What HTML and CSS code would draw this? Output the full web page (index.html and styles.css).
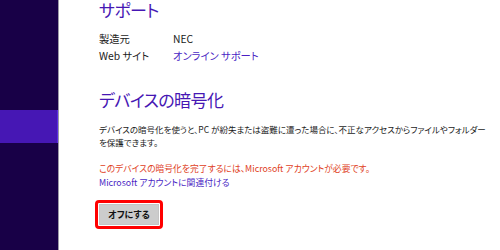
FILE: index.html
```html
<!DOCTYPE html>
<html lang="ja">
<head>
<meta charset="utf-8">
<link rel="stylesheet" href="styles.css">
</head>
<body>
<div class="app">
  <aside class="nav">
    <div class="nav-item active"></div>
  </aside>
  <main class="content">
    <h2 class="heading">サポート</h2>
    <dl class="info">
      <dt>製造元</dt><dd>NEC</dd>
      <dt>Web サイト</dt><dd><a class="link" href="#">オンライン サポート</a></dd>
    </dl>
    <h2 class="heading heading-2">デバイスの暗号化</h2>
    <p class="desc">デバイスの暗号化を使うと、PC が紛失または盗難に遭った場合に、不正なアクセスからファイルやフォルダー<br>を保護できます。</p>
    <p class="warn">このデバイスの暗号化を完了するには、Microsoft アカウントが必要です。</p>
    <a class="link link-block" href="#">Microsoft アカウントに関連付ける</a>
    <div class="btn-wrap"><button class="btn" type="button">オフにする</button></div>
  </main>
</div>
</body>
</html>
```
FILE: styles.css
```css
* { box-sizing: border-box; }
html, body { margin: 0; padding: 0; background: #fff; }
body {
  font-family: "Noto Sans CJK JP", "Noto Sans", sans-serif;
  font-feature-settings: "palt";
  color: #1a1a1a;
  width: 500px;
  height: 250px;
  overflow: hidden;
}
.app { display: flex; height: 250px; }
.nav {
  width: 59px;
  flex: none;
  background: #180047;
  border-right: 1px solid #9c9aa6;
  padding-top: 110px;
}
.nav-item.active {
  height: 33px;
  background: #4617b4;
  border-right: 1px solid #5a2de0;
}
.content { padding-left: 40px; flex: 1; }
.heading {
  margin: 0;
  font-weight: normal;
  font-size: 17px;
  line-height: 20px;
  letter-spacing: -0.6px;
  color: #4617b4;
}
.heading-2 { margin-top: 26px; }
.info {
  margin: 10px 0 0;
  display: grid;
  grid-template-columns: 74px auto;
  font-size: 10.3px;
  line-height: 17px;
}
.info dt, .info dd { margin: 0; }
.link { color: #4a1fc4; text-decoration: none; }
.desc {
  margin: 13px 0 0;
  font-size: 8.5px;
  line-height: 13px;
  white-space: nowrap;
}
.warn {
  margin: 13px 0 0;
  font-size: 8.8px;
  line-height: 14px;
  color: #e0401c;
}
.link-block { display: block; font-size: 8.8px; line-height: 14px; }
.btn-wrap {
  margin: 10px 0 0 -4px;
  display: inline-block;
  border: 3px solid #f00;
  border-radius: 4px;
  padding: 1px;
}
.btn {
  display: block;
  width: 60px;
  height: 21px;
  margin: 0;
  padding: 0;
  border: 1px solid #c4c4c4;
  background: #cccccc;
  font-family: inherit;
  font-feature-settings: "palt";
  font-weight: bold;
  font-size: 9px;
  color: #111;
}
```
